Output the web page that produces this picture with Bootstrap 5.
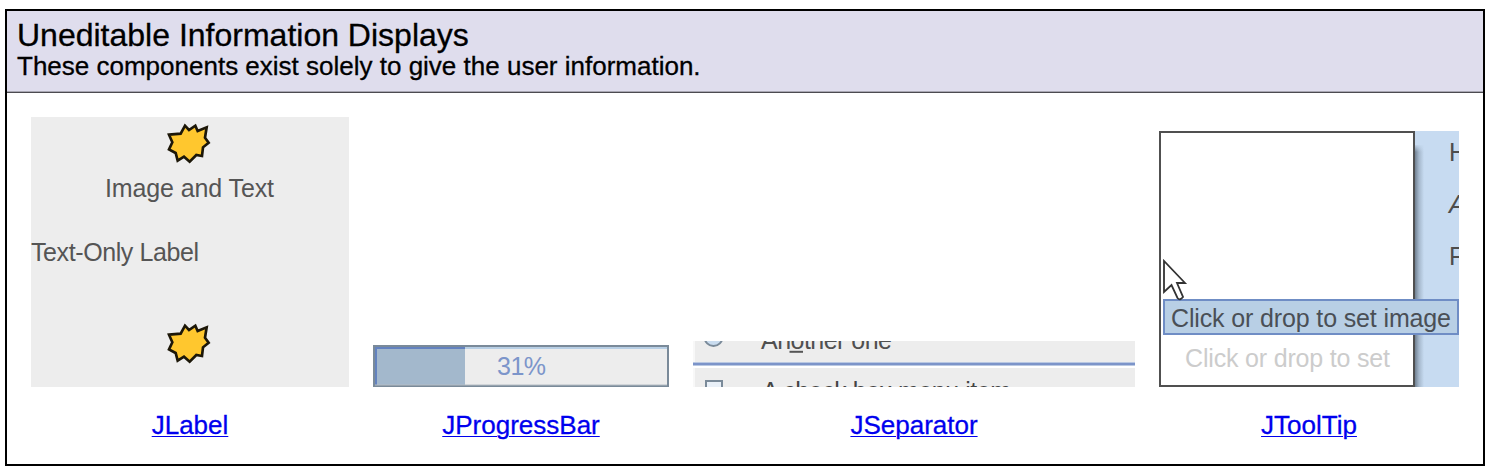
<!DOCTYPE html>
<html lang="en">
<head>
<meta charset="utf-8">
<title>Uneditable Information Displays</title>
<link href="https://cdn.jsdelivr.net/npm/bootstrap@5.3.0/dist/css/bootstrap.min.css" rel="stylesheet">
<style>
body{font-family:"Liberation Sans",Arial,sans-serif;color:#000;background:#fff;overflow:hidden}
.panel{margin:9px 0 0 5px;width:1480px;height:457px;border:2px solid #000}
.panel-head{height:82px;background:#dfdded;border-bottom:1px solid #4c4b50;padding:6px 10px 0;box-shadow:inset 0 -1px #a9a8b3;-webkit-text-stroke:.3px #000}
.panel-head h1{font-size:32px;line-height:36px;font-weight:400}
.panel-head p{font-size:26px;line-height:26px}
.samples{padding:24px 24px 0}
.samples figure a{font-size:26px;line-height:30px;margin-top:23px;margin-bottom:1px;color:#00e;text-decoration:underline 1px #00e;text-underline-offset:2px;-webkit-text-stroke:.3px #00e}
svg{display:block;font-family:"Liberation Sans",Arial,sans-serif;font-size:25px}
</style>
</head>
<body>
<main class="panel">
  <header class="panel-head">
    <h1 class="m-0">Uneditable Information Displays</h1>
    <p class="m-0">These components exist solely to give the user information.</p>
  </header>
  <section class="samples d-flex align-items-end gap-4">
    <figure class="m-0 d-flex flex-column align-items-center">
      <svg width="318" height="270" viewBox="0 0 318 270">
        <defs><path id="burst" d="M57 59 92 56 105 32 117 45 136 32 143 48 170 37 165 68 176 83 159 97 156 123 139 120 119 140 102 125 83 137 77 114 57 103 67 82Z" fill="#ffc72e" stroke="#1c1708" stroke-width="8"/></defs>
        <rect width="318" height="270" fill="#ededed"/>
        <use href="#burst" transform="translate(119 -2) scale(.3333)"/>
        <text x="74" y="80" textLength="169" fill="#555">Image and Text</text>
        <text x="0" y="144" textLength="168" fill="#555">Text-Only Label</text>
        <use href="#burst" transform="translate(119 198) scale(.3333)"/>
      </svg>
      <a href="#">JLabel</a>
    </figure>
    <figure class="m-0 d-flex flex-column align-items-center">
      <svg width="296" height="42" viewBox="0 0 296 42">
        <rect width="296" height="42" fill="#7a8a99"/>
        <rect x="2" y="2" width="292" height="38" fill="#ededed"/>
        <rect x="2" y="2" width="292" height="2" fill="#b8cfe5"/>
        <rect x="2" y="2" width="90" height="38" fill="#a3b8cc"/>
        <path d="M3 40V3H92" fill="none" stroke="#6382bf" stroke-width="2"/>
        <path d="M2 40H294" stroke="#b4bcc4"/>
        <text x="124" y="30" textLength="49" fill="#7c95ca">31%</text>
      </svg>
      <a href="#">JProgressBar</a>
    </figure>
    <figure class="m-0 d-flex flex-column align-items-center">
      <svg width="442" height="46" viewBox="0 0 442 46">
        <rect width="442" height="46" fill="#ededed"/>
        <path d="M1 0V46" stroke="#f8f8f8" stroke-width="2"/>
        <circle cx="20.500" cy="-4" r="9" fill="#c9dcef" stroke="#7a8a99" stroke-width="2"/>
        <text x="68" y="8" textLength="131" fill="#505050">Another one</text>
        <path d="M96.500 10.800H110" stroke="#555" stroke-width="2"/>
        <rect y="21" width="442" height="4" fill="#b9c8e2"/>
        <rect y="22" width="442" height="2" fill="#7c94c9"/>
        <rect y="25" width="442" height="2" fill="#fff"/>
        <rect x="13" y="40" width="16" height="16" fill="#e9f0f8" stroke="#7a8a99" stroke-width="2"/>
        <text x="69" y="59" textLength="249" fill="#444">A check box menu item</text>
      </svg>
      <a href="#">JSeparator</a>
    </figure>
    <figure class="m-0 d-flex flex-column align-items-center">
      <svg width="300" height="256" viewBox="0 0 300 256">
        <defs><linearGradient id="shade"><stop stop-color="#718192"/><stop offset=".45" stop-color="#a5b8cc"/><stop offset="1" stop-color="#c7dbf1"/></linearGradient>
        <linearGradient id="fade" x2="0" y2="1"><stop stop-color="#c7dbf1"/><stop offset="1" stop-color="#c7dbf1" stop-opacity="0"/></linearGradient></defs>
        <rect width="300" height="256" fill="#c7dbf1"/>
        <rect x="256" y="14" width="9" height="242" fill="url(#shade)"/>
        <rect x="256" y="13" width="9" height="8" fill="url(#fade)"/>
        <rect x="1" y="1" width="254" height="254" fill="#fff" stroke="#505050" stroke-width="2"/>
        <g fill="#4d4d4d"><text x="290" y="30">H</text><text x="290" y="82" font-style="italic">A</text><text x="290" y="134">F</text></g>
        <text x="26" y="236" textLength="205" fill="#ccc">Click or drop to set</text>
        <rect x="5" y="169" width="294" height="34" fill="#b8cfe5" stroke="#6f8dc5" stroke-width="2"/>
        <path d="M5 130V161L12.500 154 18.500 167Q21 170 24 166L18 152H26Z" fill="#fff" stroke="#333" stroke-width="1.800"/>
        <text x="12" y="196" textLength="280" fill="#4a4f56">Click or drop to set image</text>
      </svg>
      <a href="#">JToolTip</a>
    </figure>
  </section>
</main>
<script src="https://cdn.jsdelivr.net/npm/bootstrap@5.3.0/dist/js/bootstrap.bundle.min.js"></script>
</body>
</html>
